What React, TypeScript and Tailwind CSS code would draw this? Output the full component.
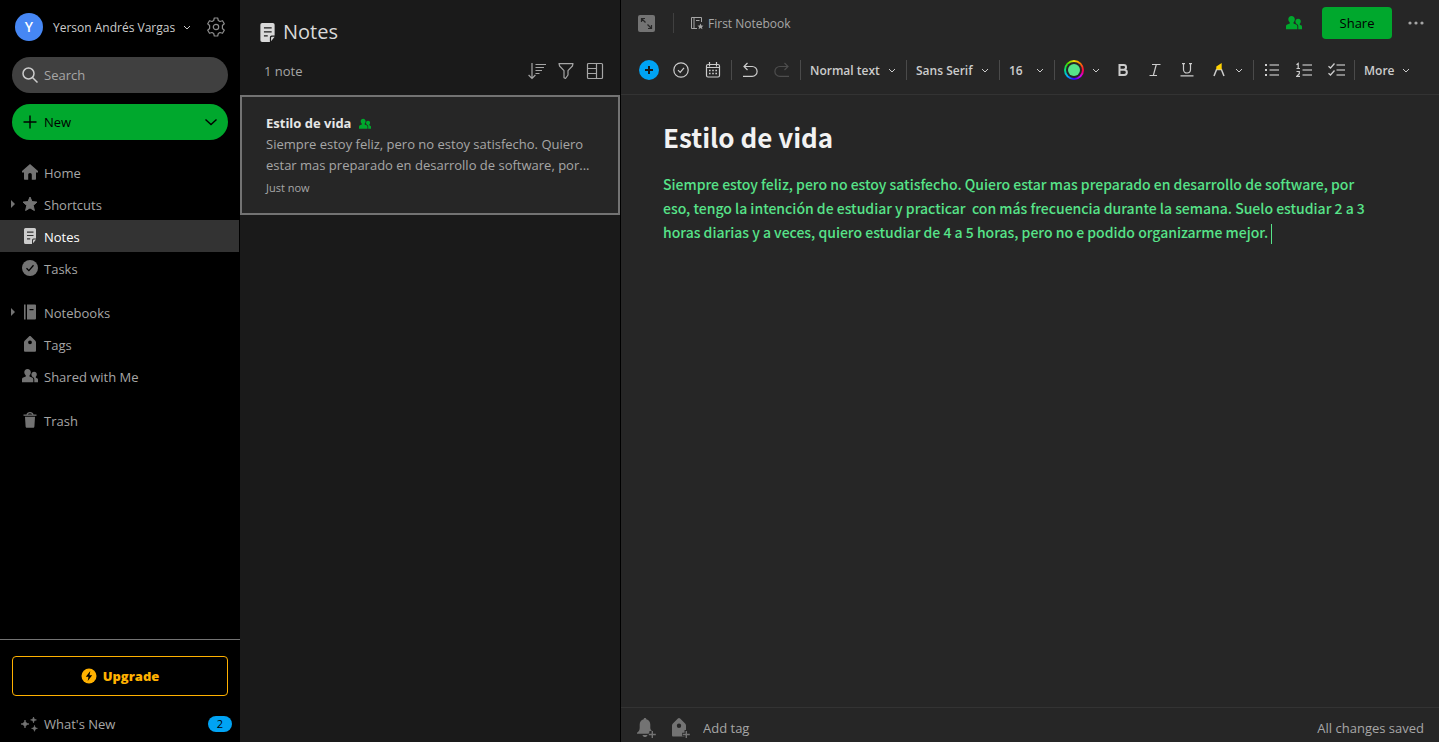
import type { ReactNode } from "react";

type IconProps = { className?: string };

const NoteIcon = ({ className = "size-4" }: IconProps) => (
  <svg viewBox="0 0 16 16" className={className} fill="currentColor" aria-hidden="true">
    <path
      fillRule="evenodd"
      d="M3.500 0h9A1.500 1.500 0 0 1 14 1.500V10.500h-2.500A1.500 1.500 0 0 0 10 12V16H3.500A1.500 1.500 0 0 1 2 14.500v-13A1.500 1.500 0 0 1 3.500 0ZM5 3.600v1.100h6.500V3.600Zm0 3.300V8h6.500V6.900Zm0 3.400v1.100h3.200v-1.100Z"
    />
    <path d="M11 15.300v-2.800a1 1 0 0 1 1-1h2Z" />
  </svg>
);

const PeopleIcon = ({ className = "size-4" }: IconProps) => (
  <svg viewBox="0 0 16 16" className={className} fill="currentColor" aria-hidden="true">
    <path d="M5.500 1c2 0 3.300 1.400 3.300 3.300 0 1.400-.5 2.500-1.300 3.200v1.100l2.500 1c.9.400 1.300 1 1.300 1.900v2.700H0v-2.700c0-.9.400-1.500 1.300-1.900l2.500-1V7.500c-.8-.7-1.500-1.800-1.500-3.200C2.300 2.400 3.500 1 5.500 1Z" />
    <path d="M12.100 3.800c1.600 0 2.700 1.100 2.700 2.600 0 1-.4 1.800-1 2.400v.9l1.200.6c.7.300 1 .8 1 1.500v2.400h-3.700v-2.800c0-1.100-.5-1.900-1.500-2.400l-.5-.2c-.5-.5-.9-1.200-.9-2.200 0-1.600 1.100-2.800 2.700-2.800Z" />
  </svg>
);

const Chevron = ({ className = "size-3" }: IconProps) => (
  <svg viewBox="0 0 12 12" className={className} fill="none" stroke="currentColor" aria-hidden="true">
    <path d="M3 5l3 3 3-3" />
  </svg>
);

const HomeIcon = () => (
  <svg viewBox="0 0 16 16" className="size-4" fill="currentColor">
    <path d="M8 0 0 7v1.500h2V14.800c0 .7.400 1 1 1h3.200V11c0-1.200.7-1.900 1.800-1.900s1.800.7 1.800 1.900v4.800H13c.6 0 1-.3 1-1V8.500h2V7Z" />
  </svg>
);

const StarIcon = () => (
  <svg viewBox="0 0 16 16" className="size-4" fill="currentColor">
    <path
      d="m8 1 2 4.600 5 .5-3.800 3.300L12.400 14.500 8 11.900l-4.400 2.600 1.200-5.100L1 6.100l5-.5Z"
      stroke="currentColor"
      strokeLinejoin="round"
    />
  </svg>
);

const CheckCircleIcon = () => (
  <svg viewBox="0 0 16 16" className="size-4">
    <circle cx="8" cy="8" r="8" fill="currentColor" />
    <path d="m4.500 8.200 2.400 2.400 4.600-5.300" fill="none" stroke="#000" strokeWidth="1.300" />
  </svg>
);

const NotebookIcon = () => (
  <svg viewBox="0 0 16 16" className="size-4" fill="currentColor">
    <path d="M2 .5h1.600v15H2Z" />
    <path
      fillRule="evenodd"
      d="M5 .5h8a1 1 0 0 1 1 1v13a1 1 0 0 1-1 1H5ZM7.500 5v1.200h4V5Z"
    />
  </svg>
);

const TagIcon = () => (
  <svg viewBox="0 0 16 16" className="size-4" fill="currentColor">
    <path
      fillRule="evenodd"
      d="M8 0c.4 0 .7.100 1 .4l4.300 4.300c.4.400.7 1 .7 1.600v8.200c0 .8-.5 1.300-1.300 1.300H3.300c-.8 0-1.300-.5-1.300-1.300V6.300c0-.6.300-1.200.7-1.600L7 .4c.3-.3.600-.4 1-.4Zm0 4.400a1.900 1.900 0 1 0 0 3.800 1.900 1.900 0 0 0 0-3.800Z"
    />
  </svg>
);

const TrashIcon = () => (
  <svg viewBox="0 0 16 16" className="size-4" fill="currentColor">
    <path d="M1.500 2.500h13v1.300h-13Z" />
    <path d="M5 2.800C5.300 1.300 6.300.6 8 .6s2.700.7 3 2.200" fill="none" stroke="currentColor" strokeWidth="1.200" />
    <path d="M3 4.800h10l-.6 9.700c-.1.900-.5 1.300-1.300 1.300H4.900c-.8 0-1.200-.4-1.300-1.300Z" />
  </svg>
);

const SparkleIcon = () => (
  <svg viewBox="0 0 18 16" className="h-4 w-[18px]" fill="currentColor">
    <path d="M5 4c.5 2.700 1.300 3.500 4 4-2.700.5-3.500 1.300-4 4-.5-2.700-1.300-3.500-4-4 2.700-.5 3.500-1.300 4-4Z" stroke="currentColor" strokeWidth=".7" />
    <path d="M13.500 1c.3 2 .9 2.600 2.900 2.900-2 .3-2.600.9-2.900 2.900-.3-2-.9-2.600-2.900-2.900 2-.3 2.600-.9 2.900-2.900ZM14.500 9.500c.3 2 .9 2.600 2.900 2.900-2 .3-2.600.9-2.900 2.900-.3-2-.9-2.600-2.900-2.900 2-.3 2.600-.9 2.900-2.900Z" stroke="currentColor" strokeWidth=".7" />
  </svg>
);

type NavItem = { label: string; icon: ReactNode; caret?: boolean; active?: boolean };

const NAV: NavItem[][] = [
  [
    { label: "Home", icon: <HomeIcon /> },
    { label: "Shortcuts", icon: <StarIcon />, caret: true },
    { label: "Notes", icon: <NoteIcon />, active: true },
    { label: "Tasks", icon: <CheckCircleIcon /> },
  ],
  [
    { label: "Notebooks", icon: <NotebookIcon />, caret: true },
    { label: "Tags", icon: <TagIcon /> },
    { label: "Shared with Me", icon: <PeopleIcon /> },
  ],
  [{ label: "Trash", icon: <TrashIcon /> }],
];

function Sidebar() {
  return (
    <aside className="flex w-60 shrink-0 flex-col bg-black text-[13px] text-[#a6a6a6]">
      <div className="flex h-[54px] items-center pl-[15px] pr-3.5">
        <span className="flex size-7 items-center justify-center rounded-full bg-[#4687f4] text-sm font-semibold text-white">
          Y
        </span>
        <button className="ml-2.5 flex flex-1 items-center gap-1.5 whitespace-nowrap text-xs text-[#ccc]">
          <span className="pt-0.5">Yerson Andrés Vargas</span>
          <Chevron />
        </button>
        <button aria-label="Settings" className="text-[#8c8c8c]">
          <svg viewBox="0 0 20 20" className="size-5" fill="none" stroke="currentColor" strokeWidth="1.200" strokeLinejoin="round">
            <path d="M8.300 1h3.400l.6 2.500 1.700 1 2.500-.8 1.800 3-1.900 1.800v3l1.900 1.800-1.800 3-2.500-.8-1.700 1-.6 2.500H8.300l-.6-2.500-1.700-1-2.500.8-1.800-3 1.900-1.800v-3L1.700 6.700l1.800-3 2.500.8 1.700-1Z" />
            <circle cx="10" cy="10" r="2.700" />
          </svg>
        </button>
      </div>

      <div className="flex flex-col gap-[11px] px-3 pt-[3px]">
        <label className="flex h-9 items-center gap-1.5 rounded-full bg-[#404040] px-2.5">
          <svg viewBox="0 0 16 16" className="size-4 shrink-0 text-[#ccc]" fill="none" stroke="currentColor" strokeWidth="1.500">
            <circle cx="6.500" cy="6.500" r="5.500" />
            <path d="m10.500 10.500 5 5" />
          </svg>
          <input
            type="search"
            aria-label="Search"
            placeholder="Search"
            className="w-full min-w-0 bg-transparent pt-0.5 outline-none placeholder:text-[#a6a6a6]"
          />
        </label>
        <button className="flex h-9 items-center gap-1.5 rounded-full bg-[#00a82d] px-2.5 text-black">
          <svg viewBox="0 0 16 16" className="size-4" stroke="currentColor" strokeWidth="1.400">
            <path d="M8 1.500v13M1.500 8h13" />
          </svg>
          <span className="pt-0.5">New</span>
          <svg viewBox="0 0 14 14" className="ml-auto size-3.5" fill="none" stroke="currentColor" strokeWidth="1.400">
            <path d="m1.500 4.500 5.500 5 5.500-5" />
          </svg>
        </button>
      </div>

      <nav className="mt-4 flex flex-col gap-3">
        {NAV.map((group, i) => (
          <ul key={i}>
            {group.map((item) => (
              <li key={item.label}>
                <a
                  href="#"
                  className={
                    item.active
                      ? "mr-px flex h-8 items-center bg-[#333] text-white"
                      : "flex h-8 items-center"
                  }
                >
                  <span className="flex w-[22px] justify-center pl-1 text-[#737373]">
                    {item.caret && (
                      <svg viewBox="0 0 4 8" className="h-2 w-1" fill="currentColor">
                        <path d="M0 0v8l4-4Z" />
                      </svg>
                    )}
                  </span>
                  <span className={item.active ? "text-[#ccc]" : "text-[#737373]"}>{item.icon}</span>
                  <span className="ml-1.5 pt-[3px]">{item.label}</span>
                </a>
              </li>
            ))}
          </ul>
        ))}
      </nav>

      <div className="mt-auto border-t border-[#737373] px-3 pb-0.5 pt-4">
        <button className="flex h-10 w-full items-center justify-center gap-1.5 rounded border border-[#ffb100] font-extrabold text-[#ffb100]">
          <svg viewBox="0 0 16 16" className="size-4">
            <circle cx="8" cy="8" r="7.500" fill="currentColor" />
            <path d="M9.300 3 4.800 8.800h2.700L6.700 13l4.500-5.800H8.500Z" fill="#000" />
          </svg>
          <span className="pt-0.5">Upgrade</span>
        </button>
        <a href="#" className="-mr-2 mt-3 flex h-8 items-center pl-2 pr-1 text-[#a6a6a6]">
          <span className="text-[#737373]">
            <SparkleIcon />
          </span>
          <span className="ml-1.5 pt-0.5">What's New</span>
          <span className="ml-auto flex h-4 w-6 items-center justify-center rounded-full bg-[#00a3f4] text-[11px] text-black">
            2
          </span>
        </a>
      </div>
    </aside>
  );
}

function NoteList() {
  return (
    <section className="flex w-[380px] shrink-0 flex-col bg-[#1a1a1a] text-[13px] text-[#a6a6a6]">
      <header className="flex h-[95px] flex-col">
        <h1 className="flex items-center gap-1.5 pl-[18px] pt-4 text-xl leading-8 text-[#d9d9d9]">
          <NoteIcon className="size-[19px]" />
          Notes
        </h1>
        <div className="flex items-center pl-6 pr-4 pt-3">
          <span className="pt-0.5">1 note</span>
          <div className="ml-auto flex gap-3">
            <button aria-label="Sort">
              <svg viewBox="0 0 18 18" className="size-[18px]" fill="none" stroke="currentColor" strokeWidth="1.200">
                <path d="M4 1v15.500M.6 13l3.400 3.500L7.400 13M7.500 2.500H18M7.500 5.500H16M7.500 8.500h6.500M7.500 11.500h4" />
              </svg>
            </button>
            <button aria-label="Filter">
              <svg viewBox="0 0 16 18" className="h-[18px] w-4" fill="none" stroke="currentColor" strokeWidth="1.200" strokeLinejoin="round">
                <path d="M1 1.600h14l-.6 2.400L10 8.600V13l-2.500 3.500L6 15.800V8.600L1.600 4Z" />
              </svg>
            </button>
            <button aria-label="View options">
              <svg viewBox="0 0 18 18" className="size-[18px]" fill="none" stroke="currentColor" strokeWidth="1.200">
                <rect x="1.500" y="1.500" width="15" height="15" rx="1" />
                <path d="M10.500 1.500v15M1.500 6.500h9M1.500 11.500h9" />
              </svg>
            </button>
          </div>
        </div>
      </header>

      <a href="#" className="block border-2 border-[#737373] bg-[#262626] px-6 pb-[13px] pt-4">
        <h2 className="flex items-center gap-2 leading-[21px] font-bold text-[#e6e6e6]">
          Estilo de vida
          <PeopleIcon className="size-3 text-[#00a82d]" />
        </h2>
        <p className="leading-[21px]">
          Siempre estoy feliz, pero no estoy satisfecho. Quiero estar mas preparado en desarrollo de
          software, por...
        </p>
        <time className="block text-[11px] leading-6">Just now</time>
      </a>
    </section>
  );
}

const Divider = () => <span className="mx-0.5 h-5 w-px shrink-0 bg-[#4a4a4a]" />;

function ToolButton({ label, children, className = "w-8" }: { label: string; children: ReactNode; className?: string }) {
  return (
    <button aria-label={label} className={`flex h-8 shrink-0 items-center justify-center ${className}`}>
      {children}
    </button>
  );
}

function ToolSelect({ label, value, className }: { label: string; value: string; className: string }) {
  return (
    <div className={`relative flex h-8 shrink-0 items-center ${className}`}>
      <select aria-label={label} defaultValue={value} className="h-8 w-full appearance-none bg-transparent pl-[7px] pt-0.5 outline-none">
        <option>{value}</option>
      </select>
      <Chevron className="pointer-events-none absolute right-1.5 size-3" />
    </div>
  );
}

function Toolbar() {
  return (
    <div className="flex h-[49px] shrink-0 items-center overflow-hidden border-b border-[#333] pl-3 text-xs font-semibold text-[#ccc]">
      <ToolButton label="Insert">
        <svg viewBox="0 0 20 20" className="size-5">
          <circle cx="10" cy="10" r="10" fill="#00a3f4" />
          <path d="M10 6v8M6 10h8" stroke="#1a1a1a" strokeWidth="2" />
        </svg>
      </ToolButton>
      <ToolButton label="Task">
        <svg viewBox="0 0 16 16" className="size-4" fill="none" stroke="currentColor" strokeWidth="1.200">
          <circle cx="8" cy="8" r="7.200" />
          <path d="m5 8.200 2.200 2.200 3.800-4.600" />
        </svg>
      </ToolButton>
      <ToolButton label="Calendar event">
        <svg viewBox="0 0 16 16" className="size-4" fill="none" stroke="currentColor" strokeWidth="1.200">
          <rect x="1.500" y="2.500" width="13" height="12.500" rx="1.500" />
          <path d="M4.500 0v4.500M11.500 0v4.500M1.500 5.500h13" />
          <path d="M4 8.500h8M4 11.500h8" strokeWidth="1.600" strokeDasharray="1.600" />
        </svg>
      </ToolButton>
      <Divider />
      <ToolButton label="Undo">
        <svg viewBox="0 0 16 16" className="size-4" fill="none" stroke="currentColor" strokeWidth="1.200">
          <path d="M5.500 1 2 4.500 5.500 8M2 4.500h8.200a4.900 4.900 0 0 1 0 9.800H1" />
        </svg>
      </ToolButton>
      <ToolButton label="Redo" className="w-8 text-[#4d4d4d]">
        <svg viewBox="0 0 16 16" className="size-4" fill="none" stroke="currentColor" strokeWidth="1.200">
          <path d="M10.500 1 14 4.500 10.500 8M14 4.500H5.800a4.900 4.900 0 0 0 0 9.800H15" />
        </svg>
      </ToolButton>
      <Divider />
      <ToolSelect label="Text style" value="Normal text" className="w-[101px]" />
      <Divider />
      <ToolSelect label="Font" value="Sans Serif" className="w-[88px]" />
      <Divider />
      <ToolSelect label="Font size" value="16" className="w-[50px]" />
      <Divider />
      <ToolButton label="Text color" className="w-[50px] gap-1.5 pl-0.5">
        <span className="flex size-5 items-center justify-center rounded-full bg-[conic-gradient(#f6e000,#ff7a00,#ff0040,#d000ff,#3000ff,#00b0ff,#00e080,#40e000,#f6e000)]">
          <span className="flex size-4 items-center justify-center rounded-full bg-[#262626]">
            <span className="size-3 rounded-full bg-[#57e389]" />
          </span>
        </span>
        <Chevron />
      </ToolButton>
      <ToolButton label="Bold">
        <svg viewBox="0 0 16 16" className="size-4" fill="none" stroke="currentColor" strokeWidth="2">
          <path d="M4.500 3h4.200a2.300 2.300 0 0 1 0 4.700H4.500ZM4.500 7.700h4.700a2.600 2.600 0 0 1 0 5.300H4.500Z" />
        </svg>
      </ToolButton>
      <ToolButton label="Italic">
        <svg viewBox="0 0 16 16" className="size-4" fill="none" stroke="currentColor" strokeWidth="1.200">
          <path d="M5 2.500h8.500M2.500 13.500H10M9.300 2.500l-3 11" />
        </svg>
      </ToolButton>
      <ToolButton label="Underline">
        <svg viewBox="0 0 16 16" className="size-4" fill="none" stroke="currentColor" strokeWidth="1.200">
          <path d="M4.500 1v6.500a3.500 3.500 0 0 0 7 0V1M3 1.600h3M10 1.600h3M1.500 13.800h13" />
        </svg>
      </ToolButton>
      <ToolButton label="Highlight" className="w-12 gap-1.5 pl-0.5">
        <svg viewBox="0 0 16 16" className="size-4" fill="none">
          <path d="m3 14 2.600-6.500h4.800L13 14" stroke="currentColor" strokeWidth="1.500" />
          <path d="M5.300 7.500V4.500L10.700 1v6.500Z" fill="#ffd100" />
        </svg>
        <Chevron />
      </ToolButton>
      <Divider />
      <ToolButton label="Bulleted list">
        <svg viewBox="0 0 16 16" className="size-4" stroke="currentColor" strokeWidth="1.500">
          <path d="M1 3h2M1 8h2M1 13h2" strokeWidth="2" />
          <path d="M5.500 3H15M5.500 8H15M5.500 13H15" stroke="#a6a6a6" />
        </svg>
      </ToolButton>
      <ToolButton label="Numbered list">
        <svg viewBox="0 0 16 16" className="size-4" fill="none" stroke="currentColor" strokeWidth="1.200">
          <path d="M.5 2.800 2.200 1.500v5M.5 6.500h3.500M.5 9.500h2.800v2.200L.7 14.400H4" />
          <path d="M6.500 3H16M6.500 8H16M6.500 13H16" stroke="#a6a6a6" strokeWidth="1.500" />
        </svg>
      </ToolButton>
      <ToolButton label="Checklist">
        <svg viewBox="0 0 17 16" className="h-4 w-[17px]" fill="none" stroke="currentColor" strokeWidth="1.300">
          <path d="M.5 4.200 2.500 6l4-4.500M.5 11.200l2 1.800 4-4.500" />
          <path d="M8.500 3H17M8.500 8H17M8.500 13H17" stroke="#a6a6a6" strokeWidth="1.500" />
        </svg>
      </ToolButton>
      <Divider />
      <button className="flex h-8 shrink-0 items-center gap-1.5 pl-[7px]">
        <span className="pt-0.5">More</span>
        <Chevron />
      </button>
    </div>
  );
}

const NOTE_TEXT =
  "Siempre estoy feliz, pero no estoy satisfecho. Quiero estar mas preparado en desarrollo de software, por eso, tengo la intención de estudiar y practicar  con más frecuencia durante la semana. Suelo estudiar 2 a 3 horas diarias y a veces, quiero estudiar de 4 a 5 horas, pero no e podido organizarme mejor. ";

function Editor() {
  return (
    <main className="flex min-w-0 flex-1 flex-col border-l border-black bg-[#262626] text-[13px] text-[#a6a6a6]">
      <header className="flex h-[46px] shrink-0 items-center pl-[17px] pr-[15px]">
        <button aria-label="Expand note">
          <svg viewBox="0 0 17 17" className="size-[17px]">
            <rect width="17" height="17" rx="2" fill="#737373" />
            <path
              d="M3.500 7V3.500H7M3.500 3.500l4 4M13.500 10v3.500H10M13.500 13.500l-4-4"
              fill="none"
              stroke="#262626"
              strokeWidth="1.200"
            />
          </svg>
        </button>
        <span className="ml-[18px] h-5 w-px bg-[#404040]" />
        <a href="#" className="ml-4 flex items-center gap-1 text-xs">
          <svg viewBox="0 0 14 14" className="size-3.5" fill="none" stroke="currentColor">
            <path d="M11.500 6V1.500H1.500v11H7M4 1.500v11M6 4.500h3.500" />
            <path d="m10.500 7.500.9 2 2.100.2-1.600 1.400.5 2.100-1.900-1.100-1.900 1.100.5-2.100-1.600-1.400 2.100-.2Z" fill="currentColor" stroke="none" />
          </svg>
          <span className="pt-0.5">First Notebook</span>
        </a>
        <button aria-label="Shared with" className="ml-auto text-[#00a82d]">
          <PeopleIcon />
        </button>
        <button className="ml-5 h-8 w-[70px] rounded bg-[#00a82d] pt-0.5 text-black">Share</button>
        <button aria-label="More actions" className="ml-4">
          <svg viewBox="0 0 16 16" className="size-4" fill="currentColor">
            <circle cx="2" cy="8" r="1.600" />
            <circle cx="8" cy="8" r="1.600" />
            <circle cx="14" cy="8" r="1.600" />
          </svg>
        </button>
      </header>

      <Toolbar />

      <div className="flex-1 overflow-auto pb-6 pl-[42px] pr-[62px] pt-[21px] font-['Noto_Sans_CJK_SC',sans-serif]">
        <input
          aria-label="Title"
          defaultValue="Estilo de vida"
          className="block h-10 w-full bg-transparent text-[26px] font-bold text-[#f2f2f2] outline-none"
        />
        <div
          role="textbox"
          aria-label="Note body"
          aria-multiline="true"
          tabIndex={0}
          className="mt-4 whitespace-pre-wrap text-sm leading-6 font-medium text-[#57e389] outline-none"
        >
          {NOTE_TEXT}
          <span className="inline-block h-5 w-px bg-[#57e389] align-middle" />
        </div>
      </div>

      <footer className="flex h-[35px] shrink-0 items-center border-t border-[#333] pl-4 pr-[15px] pt-1.5">
        <button aria-label="Add reminder" className="text-[#737373]">
          <svg viewBox="0 0 20 20" className="size-5" fill="currentColor">
            <path d="M8 0c.8 0 1.300.5 1.300 1.200C12 2 13.300 4 13.300 6.500v3.300c0 1.500.6 2.200 1.700 3l-2.700.4v2.600H0v-1c1.800-1.200 2.700-2.700 2.700-5V6.500C2.700 4 4 2 6.700 1.200 6.700.500 7.200 0 8 0ZM5.500 17h5c-.4 1.400-1.300 2-2.500 2s-2.100-.6-2.500-2Z" />
            <path d="M15.300 13v7M11.800 16.500h7" stroke="#262626" strokeWidth="3" />
            <path d="M15.300 13v7M11.800 16.500h7" stroke="currentColor" strokeWidth="1.400" />
          </svg>
        </button>
        <button aria-label="Add tag" className="ml-3.5 text-[#737373]">
          <svg viewBox="0 0 20 20" className="size-5" fill="currentColor">
            <path
              fillRule="evenodd"
              d="M8 0c.4 0 .8.200 1.100.5l5 5c.6.600.9 1.200.9 2V18.500H2.300c-.8 0-1.300-.5-1.300-1.300V7.500c0-.8.300-1.400.9-2l5-5C7.200.2 7.600 0 8 0Zm0 5.500A2.200 2.200 0 1 0 8 9.900a2.200 2.200 0 0 0 0-4.400Z"
            />
            <path d="M15.300 12v8M11.200 16.500H20" stroke="#262626" strokeWidth="3.500" />
            <path d="M15.300 13v7M11.800 16.500h7" stroke="currentColor" strokeWidth="1.400" />
          </svg>
        </button>
        <input
          aria-label="Tag name"
          placeholder="Add tag"
          className="ml-3 w-40 bg-transparent pt-0.5 outline-none placeholder:text-[#a6a6a6]"
        />
        <span className="ml-auto pt-0.5">All changes saved</span>
      </footer>
    </main>
  );
}

export default function App() {
  return (
    <div className="flex h-screen overflow-hidden bg-black font-['Open_Sans',sans-serif]">
      <Sidebar />
      <NoteList />
      <Editor />
    </div>
  );
}
